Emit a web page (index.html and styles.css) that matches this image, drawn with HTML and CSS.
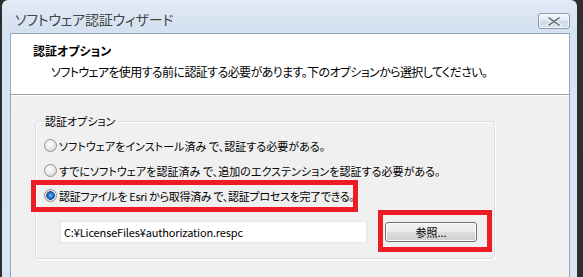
FILE: index.html
```html
<!DOCTYPE html>
<html lang="ja">
  <head>
    <meta charset="UTF-8" />
    <title>ソフトウェア認証ウィザード</title>
    <link rel="stylesheet" href="styles.css">
  </head>
  <body>
    <div class="window">
      <div class="titlebar">
        <span class="title">ソフトウェア認証ウィザード</span>
        <button class="close" aria-label="閉じる">
          <svg width="14" height="9" viewBox="0 0 14 9">
            <path d="M2 1 L12 8 M12 1 L2 8" stroke="#fff" stroke-width="3.6" stroke-linecap="round" />
            <path d="M2 1 L12 8 M12 1 L2 8" stroke="#6f7a8b" stroke-width="1.8" stroke-linecap="round" />
          </svg>
        </button>
      </div>

      <div class="frame">
        <div class="content">
          <div class="header">
            <h1>認証オプション</h1>
            <p class="subtitle">ソフトウェアを使用する前に認証する必要があります。下のオプションから選択してください。</p>
          </div>

          <div class="body">
            <fieldset class="group">
              <legend>認証オプション</legend>
              <label class="option first">
                <span class="radio"></span>
                <span class="text">ソフトウェアをインストール済み で、認証する必要がある。</span>
              </label>
              <label class="option">
                <span class="radio"></span>
                <span class="text">すでにソフトウェアを認証済み で、追加のエクステンションを認証する必要がある。</span>
              </label>
              <label class="option marked">
                <span class="radio checked"></span>
                <span class="text">認証ファイルを Esri から取得済み で、認証プロセスを完了できる。</span>
              </label>
              <div class="file-row">
                <input class="path" type="text" value="C:¥LicenseFiles¥authorization.respc" />
                <span class="browse-wrap">
                  <button class="browse">参照...</button>
                </span>
              </div>
            </fieldset>
          </div>
        </div>
      </div>
    </div>
  </body>
</html>
```

FILE: styles.css
```css
body {
  margin: 0;
  width: 583px;
  height: 277px;
  overflow: hidden;
  background: #2e2e2e;
  font-family: "Noto Sans CJK JP", "Liberation Sans", sans-serif;
  font-feature-settings: "palt";
}
.window {
  display: flex;
  flex-direction: column;
  height: 277px;
  margin-left: 2px;
  margin-right: 6px;
  border-radius: 6px 6px 0 0;
  background: linear-gradient(#e2ebf6, #d3e0f0 33px, #d6e3f2 34px, #d8e5f3);
}
.titlebar {
  display: flex;
  align-items: flex-start;
  height: 33px;
  padding-left: 13px;
}
.title {
  margin-top: 9px;
  font-size: 14px;
  line-height: 20px;
  letter-spacing: -0.2px;
  color: #444;
}
.close {
  display: flex;
  align-items: center;
  justify-content: center;
  margin: 13px 7px 0 auto;
  width: 32px;
  height: 16px;
  padding: 0;
  border: 1px solid #8c99ab;
  border-radius: 3px;
  background: linear-gradient(#f3f7fb, #dfe7f1 50%, #cfdae8 51%, #d9e3ef);
  box-shadow: inset 0 0 0 1px rgba(255, 255, 255, 0.7);
}
.frame {
  flex: 1;
  display: flex;
  padding: 0 7px 0 8px;
}
.content {
  flex: 1;
  display: flex;
  flex-direction: column;
  border: 1px solid #95a6bb;
  border-bottom: none;
  background: #f0f0f0;
}
.header {
  height: 61px;
  box-sizing: border-box;
  padding: 9px 0 0 22px;
  background: #fff;
  border-bottom: 1px solid #a0a0a0;
  box-shadow: 0 1px #fff;
}
.header h1 {
  margin: 0;
  font-size: 12px;
  line-height: 16px;
  font-weight: bold;
  color: #000;
}
.subtitle {
  margin: 5px 0 0;
  padding-left: 18px;
  font-size: 12px;
  line-height: 16px;
  letter-spacing: -0.6px;
  color: #000;
}
.body {
  padding: 18px 0 0 24px;
}
.group {
  width: 460px;
  box-sizing: border-box;
  margin: 0;
  padding: 0 0 15px 8px;
  border: 1px solid #d5dfe5;
  border-radius: 3px;
  box-shadow: inset 1px 1px #fff, 1px 1px #fff;
}
.group legend {
  margin-left: 0;
  padding: 0 1px;
  font-size: 11px;
  line-height: 16px;
  color: #000;
}
.option {
  position: relative;
  display: flex;
  align-items: center;
  height: 25px;
  font-size: 11px;
  color: #000;
}
.option.first {
  margin-top: 4px;
}
.option .text {
  letter-spacing: 0.05px;
}
.radio {
  width: 11px;
  height: 11px;
  margin-right: 2px;
  border: 1px solid #929292;
  border-radius: 50%;
  background: radial-gradient(circle at 40% 35%, #fff, #e6e6e6 55%, #c9c9c9);
}
.radio.checked {
  background: radial-gradient(circle, #7fc4ff 0, #2a7fd4 2px, #0d4d9a 4px, #d9d9d9 4.5px, #f5f5f5 6px);
}
.marked .text {
  letter-spacing: -0.3px;
}
.marked::before {
  content: "";
  position: absolute;
  left: -13px;
  top: -3px;
  width: 317px;
  height: 22px;
  border: 5px solid #ed1c24;
}
.file-row {
  display: flex;
  align-items: center;
  margin-top: 13px;
  padding-left: 16px;
}
.path {
  width: 307px;
  height: 22px;
  box-sizing: border-box;
  padding: 0 3px;
  border: 1px solid #e2e7ed;
  background: #fff;
  font-family: "Noto Sans CJK JP", "Liberation Sans", sans-serif;
  font-size: 11px;
  letter-spacing: -0.15px;
  color: #000;
}
.browse-wrap {
  position: relative;
  margin-left: 18px;
  display: flex;
}
.browse-wrap::before {
  content: "";
  position: absolute;
  left: -7px;
  top: -12px;
  width: 104px;
  height: 32px;
  border: 5px solid #ed1c24;
}
.browse {
  width: 92px;
  height: 20px;
  padding: 0;
  border: 1px solid #707070;
  border-radius: 3px;
  background: linear-gradient(#f2f2f2, #ebebeb 50%, #dddddd 51%, #cfcfcf);
  box-shadow: inset 0 0 0 1px #fcfcfc;
  font-family: "Noto Sans CJK JP", "Liberation Sans", sans-serif;
  font-size: 11px;
  color: #000;
}
```
